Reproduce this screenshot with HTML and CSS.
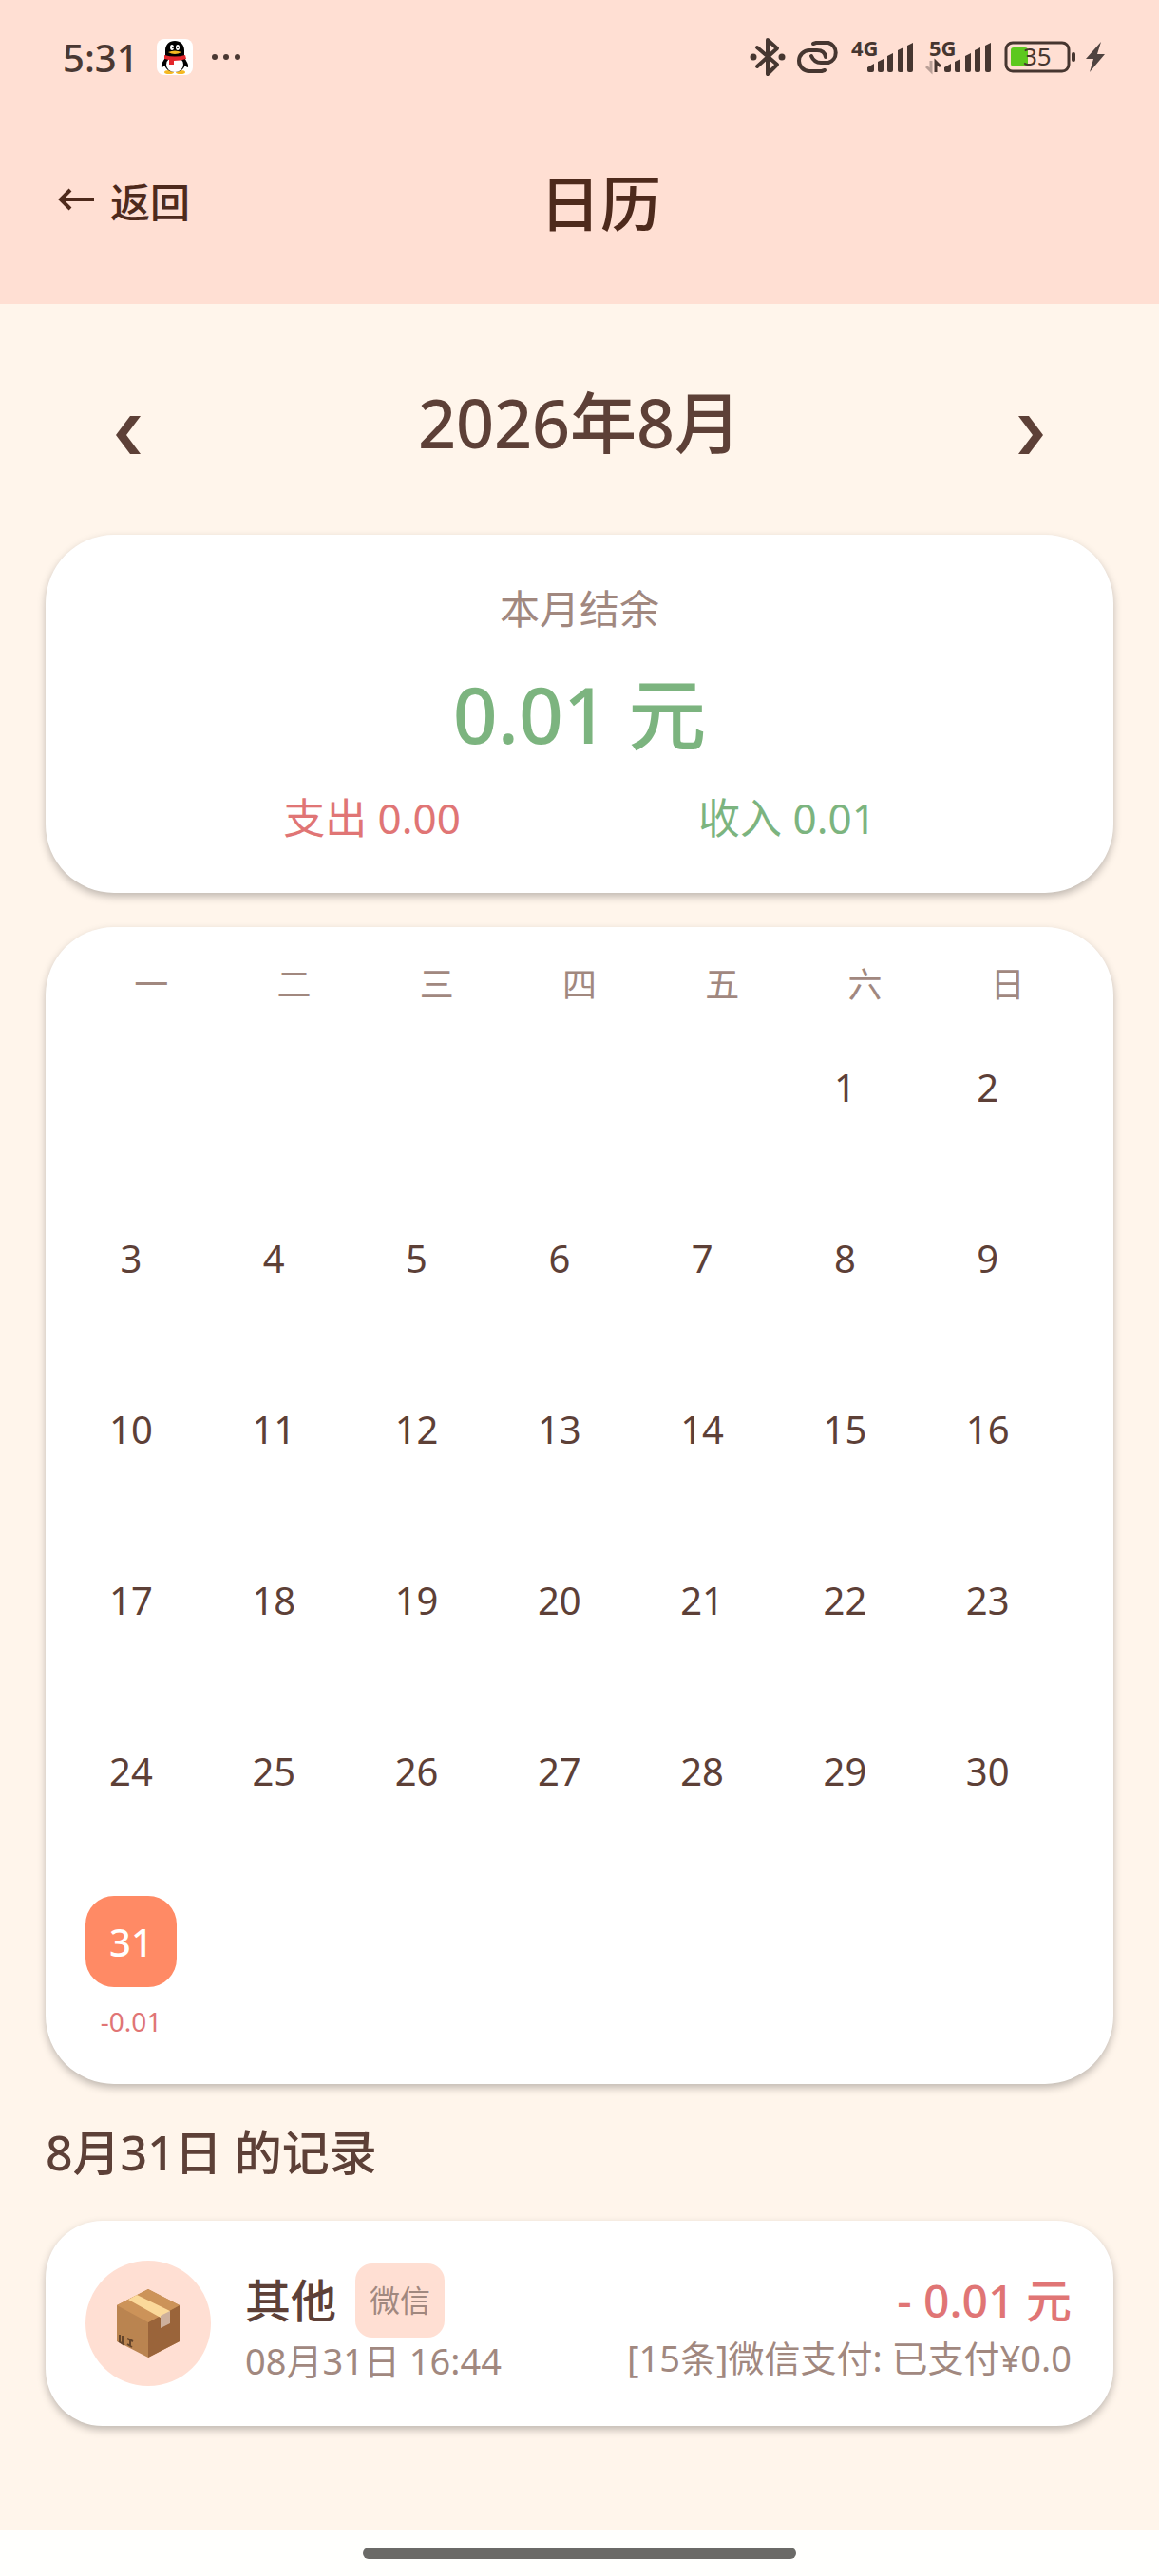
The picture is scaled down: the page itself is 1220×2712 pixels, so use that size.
FILE: index.html
```
<!DOCTYPE html>
<html lang="zh-CN">
<head>
  <meta charset="UTF-8">
  <meta name="viewport" content="width=device-width, initial-scale=1.0">
  <title>日历</title>
  <link rel="stylesheet" href="styles.css">
</head>
<body>
  <header class="top">
    <div class="status-bar">
      <div class="status-left">
        <span class="clock">5:31</span>
        <svg class="qq" width="38" height="38" viewBox="0 0 38 38">
          <rect width="38" height="38" rx="8" fill="#fff"/>
          <ellipse cx="13" cy="35" rx="5" ry="2" fill="#f5b921"/>
          <ellipse cx="25" cy="35" rx="5" ry="2" fill="#f5b921"/>
          <path d="M10 18C8 22 4 26 5 30c2 0 4-3 5-4M28 18c2 4 6 8 5 12-2 0-4-3-5-4" fill="#000"/>
          <path d="M19 2c-6 0-10 4-10 10v6c-1 3-2 6-1 9 1 5 6 8 11 8s10-3 11-8c1-3 0-6-1-9v-6c0-6-4-10-10-10z" fill="#000"/>
          <ellipse cx="19" cy="27" rx="9" ry="8" fill="#fff"/>
          <ellipse cx="16" cy="9" rx="2" ry="3" fill="#fff"/>
          <ellipse cx="22" cy="9" rx="2" ry="3" fill="#fff"/>
          <circle cx="17" cy="9" r="1" fill="#000"/>
          <circle cx="22" cy="9" r="1" fill="#000"/>
          <path d="M12 14q7-3 14 0q-7 4-14 0z" fill="#f5b921"/>
          <path d="M8 17q11 3 22 0l1 4q-6 2-13 2v4h-5v-5l-5-1z" fill="#e3262b"/>
        </svg>
        <svg width="32" height="8" viewBox="0 0 32 8" fill="#4a3832">
          <circle cx="4" cy="4" r="3"/><circle cx="16" cy="4" r="3"/><circle cx="28" cy="4" r="3"/>
        </svg>
      </div>
      <div class="status-right">
        <svg width="40" height="44" viewBox="0 0 40 44" fill="none" stroke="#463630" stroke-width="4" stroke-linejoin="round" stroke-linecap="round">
          <path d="M9 12l21 18-10 10V4l10 9L9 32"/>
          <circle cx="5" cy="22" r="2" fill="#463630" stroke-width="3"/>
          <circle cx="35" cy="22" r="2" fill="#463630" stroke-width="3"/>
        </svg>
        <svg width="48" height="38" viewBox="0 0 48 38" fill="none" stroke="#463630" stroke-width="4" stroke-linecap="round">
          <path d="M30 33l-3 1H14a11 11 0 0 1 0-22h8q8 0 9 7"/>
          <path d="M18 5l3-1h13a11 11 0 0 1 0 21h-8q-7 0-10-7"/>
        </svg>
        <svg width="68" height="56" viewBox="0 -8 68 56" fill="#463630">
          <text class="network" x="0" y="19">4G</text>
          <path d="M17 34v-3l7-4v7q0 2-2 2h-3q-2 0-2-2z"/>
          <path d="M28 25l6-3v12q0 2-2 2h-2q-2 0-2-2z"/>
          <path d="M38 19l6-3v18q0 2-2 2h-2q-2 0-2-2z"/>
          <path d="M49 13l6-3v24q0 2-2 2h-2q-2 0-2-2z"/>
          <path d="M59 8l6-3v29q0 2-2 2h-2q-2 0-2-2z"/>
        </svg>
        <svg width="72" height="56" viewBox="0 -8 72 56" fill="#463630">
          <text class="network" x="4" y="19">5G</text>
          <path d="M6 24v11l-5-5" fill="none" stroke="#b9a097" stroke-width="3"/>
          <path d="M11 36V25l5 5" fill="none" stroke="#463630" stroke-width="3"/>
          <path d="M20 34v-3l7-4v7q0 2-2 2h-3q-2 0-2-2z"/>
          <path d="M31 25l6-3v12q0 2-2 2h-2q-2 0-2-2z"/>
          <path d="M42 19l6-3v18q0 2-2 2h-2q-2 0-2-2z"/>
          <path d="M52 13l6-3v24q0 2-2 2h-2q-2 0-2-2z"/>
          <path d="M63 8l6-3v29q0 2-2 2h-2q-2 0-2-2z"/>
        </svg>
        <svg width="76" height="36" viewBox="0 0 76 36">
          <rect x="3" y="3" width="66" height="30" rx="7" fill="none" stroke="#463630" stroke-width="3"/>
          <rect x="8" y="8" width="18" height="20" rx="3" fill="#5cc81e"/>
          <rect x="72" y="13" width="4" height="10" rx="2" fill="#463630"/>
          <text class="battery" x="21" y="27" fill="#463630">35</text>
        </svg>
        <svg width="22" height="34" viewBox="0 0 22 34" fill="#4f4340">
          <path d="M17 1L1 19h8L5 33 21 14h-8z"/>
        </svg>
      </div>
    </div>
    <div class="title-bar">
      <button type="button" class="back">
        <svg width="40" height="24" viewBox="0 0 40 24" fill="none" stroke="currentColor" stroke-width="4">
          <path d="M39 12H4M14 2L4 12l10 10"/>
        </svg>
        返回
      </button>
      <h1>日历</h1>
    </div>
  </header>

  <main>
    <div class="month-nav">
      <button type="button" aria-label="上个月">
        <svg width="26" height="40" viewBox="0 0 26 40" fill="currentColor"><path d="M15 0h11L11 20l15 20H15L0 20z"/></svg>
      </button>
      <h2>2026年8月</h2>
      <button type="button" aria-label="下个月">
        <svg width="26" height="40" viewBox="0 0 26 40" fill="currentColor"><path d="M11 0H0l15 20L0 40h11l15-20z"/></svg>
      </button>
    </div>

    <section class="card summary">
      <p class="summary-label">本月结余</p>
      <p class="balance">0.01 元</p>
      <div class="totals">
        <span class="expense">支出 0.00</span>
        <span class="income">收入 0.01</span>
      </div>
    </section>

    <section class="card calendar">
      <table>
        <thead>
          <tr><th>一</th><th>二</th><th>三</th><th>四</th><th>五</th><th>六</th><th>日</th></tr>
        </thead>
        <tbody>
          <tr>
            <td></td><td></td><td></td><td></td><td></td>
            <td><button type="button">1</button></td>
            <td><button type="button">2</button></td>
          </tr>
          <tr>
            <td><button type="button">3</button></td>
            <td><button type="button">4</button></td>
            <td><button type="button">5</button></td>
            <td><button type="button">6</button></td>
            <td><button type="button">7</button></td>
            <td><button type="button">8</button></td>
            <td><button type="button">9</button></td>
          </tr>
          <tr>
            <td><button type="button">10</button></td>
            <td><button type="button">11</button></td>
            <td><button type="button">12</button></td>
            <td><button type="button">13</button></td>
            <td><button type="button">14</button></td>
            <td><button type="button">15</button></td>
            <td><button type="button">16</button></td>
          </tr>
          <tr>
            <td><button type="button">17</button></td>
            <td><button type="button">18</button></td>
            <td><button type="button">19</button></td>
            <td><button type="button">20</button></td>
            <td><button type="button">21</button></td>
            <td><button type="button">22</button></td>
            <td><button type="button">23</button></td>
          </tr>
          <tr>
            <td><button type="button">24</button></td>
            <td><button type="button">25</button></td>
            <td><button type="button">26</button></td>
            <td><button type="button">27</button></td>
            <td><button type="button">28</button></td>
            <td><button type="button">29</button></td>
            <td><button type="button">30</button></td>
          </tr>
          <tr>
            <td>
              <button type="button" class="selected">31</button>
              <span class="day-amount">-0.01</span>
            </td>
            <td></td><td></td><td></td><td></td><td></td><td></td>
          </tr>
        </tbody>
      </table>
    </section>

    <h3>8月31日 的记录</h3>

    <article class="card record">
      <div class="category-icon">
        <svg width="68" height="74" viewBox="0 0 68 74">
          <path d="M34 1l33 17v38L34 73 1 56V18z" fill="#ba8450"/>
          <path d="M34 36l33-18v38L34 73z" fill="#9a643a"/>
          <path d="M34 1l33 17-33 18L1 18z" fill="#cc9359"/>
          <path d="M22 7l-9 5 34 19v10l10-5V24z" fill="#fbd99a"/>
          <path d="M47 29l10-5v13l-10 5z" fill="#cdb09c"/>
          <path d="M4 49v8M7 50v8M3 56l6 4M12 53l6 3M15 55v6M12 59l5 3" fill="none" stroke="#65452b" stroke-width="2"/>
        </svg>
      </div>
      <div class="record-info">
        <div class="record-name">其他 <span class="tag">微信</span></div>
        <div class="record-sub">08月31日 16:44</div>
      </div>
      <div class="record-value">
        <div class="record-amount">- 0.01 元</div>
        <div class="record-sub">[15条]微信支付: 已支付¥0.0</div>
      </div>
    </article>
  </main>

  <footer class="gesture-bar"><span class="handle"></span></footer>
</body>
</html>
```
FILE: styles.css
```
:root {
  --header: #ffdfd3;
  --background: #fff5eb;
  --card: #ffffff;
  --title: #4e2a1c;
  --text: #5d4037;
  --text-light: #a1887f;
  --expense: #e07575;
  --income: #7cb47f;
  --selected: #ff8a65;
}

* {
  box-sizing: border-box;
}

body {
  display: flex;
  flex-direction: column;
  min-height: 100vh;
  margin: 0;
  background-color: var(--background);
  color: var(--text);
  font-family: 'Noto Sans', 'Noto Sans CJK SC', sans-serif;
}

h1, h2, h3, p {
  margin: 0;
  font-weight: 500;
}

button {
  padding: 0;
  border: none;
  background: none;
  color: inherit;
  font-family: inherit;
  cursor: pointer;
}

svg {
  display: block;
}

.top {
  height: 320px;
  background-color: var(--header);
  color: var(--title);
}

.status-bar {
  display: flex;
  justify-content: space-between;
  align-items: center;
  height: 120px;
  padding: 0 56px 0 66px;
}

.status-left,
.status-right {
  display: flex;
  align-items: center;
}

.status-left {
  gap: 19px;
}

.status-right {
  gap: 10px;
}

.clock {
  color: #4a3832;
  font-size: 40px;
  font-weight: 500;
}

.network {
  font-size: 22px;
  font-weight: 700;
}

.battery {
  font-size: 26px;
}

.title-bar {
  display: flex;
  align-items: center;
  height: 180px;
  padding: 0 156px 0 60px;
}

.back {
  display: flex;
  align-items: center;
  gap: 16px;
  font-size: 42px;
  font-weight: 500;
}

h1 {
  flex: 1;
  font-size: 64px;
  text-align: center;
}

main {
  flex: 1;
  padding: 0 48px;
}

.month-nav {
  display: flex;
  justify-content: space-between;
  align-items: center;
  height: 243px;
  padding: 0 74px;
}

.month-nav button {
  padding-top: 32px;
}

h2 {
  font-size: 70px;
}

.card {
  background-color: var(--card);
  border-radius: 72px;
  box-shadow: 0 4px 8px rgba(0, 0, 0, 0.25);
}

.summary {
  padding: 46px 0 47px;
  text-align: center;
}

.summary-label {
  color: var(--text-light);
  font-size: 42px;
  font-weight: 400;
  line-height: 64px;
}

.balance {
  color: var(--income);
  font-size: 82px;
  line-height: 156px;
}

.totals {
  display: flex;
  justify-content: space-evenly;
  font-size: 44px;
  line-height: 64px;
}

.expense {
  color: var(--expense);
}

.income {
  color: var(--income);
}

.calendar {
  margin-top: 36px;
  padding: 0 36px 18px;
}

table {
  width: 100%;
  table-layout: fixed;
  border-collapse: collapse;
}

th {
  height: 120px;
  padding: 0 0 4px;
  color: var(--text-light);
  font-size: 36px;
  font-weight: 400;
}

td {
  height: 180px;
  padding: 0 6px;
  vertical-align: top;
}

td button {
  display: block;
  width: 96px;
  height: 96px;
  border-radius: 30px;
  font-size: 40px;
}

td .selected {
  background-color: var(--selected);
  color: #fff;
  font-weight: 500;
}

.day-amount {
  display: block;
  width: 96px;
  padding-top: 16px;
  color: var(--expense);
  font-size: 28px;
  line-height: 40px;
  text-align: center;
}

h3 {
  padding: 36px 0;
  font-size: 50px;
  line-height: 72px;
}

.record {
  display: flex;
  align-items: center;
  gap: 36px;
  padding: 42px 44px 42px 42px;
  border-radius: 60px;
}

.category-icon {
  display: flex;
  justify-content: center;
  align-items: center;
  width: 132px;
  height: 132px;
  border-radius: 50%;
  background-color: var(--header);
}

.record-name {
  display: flex;
  align-items: center;
  gap: 20px;
  font-size: 48px;
  font-weight: 500;
  line-height: 78px;
}

.tag {
  padding: 0 15px;
  border-radius: 18px;
  background-color: var(--header);
  color: var(--text-light);
  font-size: 32px;
  font-weight: 400;
}

.record-sub {
  color: var(--text-light);
  font-size: 38px;
  line-height: 48px;
}

.record-value {
  flex: 1;
  text-align: right;
}

.record-amount {
  color: var(--expense);
  font-size: 48px;
  font-weight: 500;
  line-height: 72px;
}

.gesture-bar {
  display: flex;
  justify-content: center;
  align-items: center;
  height: 48px;
  background-color: #fffffd;
}

.handle {
  width: 456px;
  height: 12px;
  border-radius: 6px;
  background-color: #6b6a67;
}
```
